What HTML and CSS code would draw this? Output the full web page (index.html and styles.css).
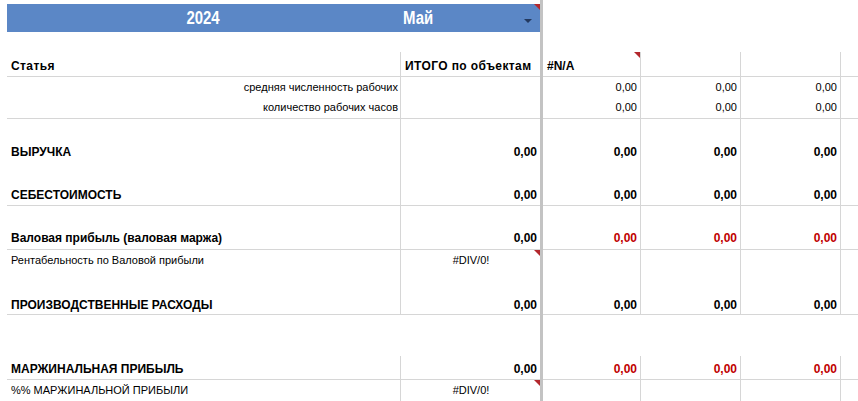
FILE: index.html
```html
<!DOCTYPE html>
<html lang="ru">
<head>
<meta charset="utf-8">
<title>Отчёт</title>
<link rel="stylesheet" href="styles.css">
</head>
<body>
<div class="sheet">
  <div class="row r-top">
    <div class="c a"></div><div class="c b"></div><div class="fz"></div>
    <div class="c m1"></div><div class="c m2"></div><div class="c m3"></div><div class="c m4"></div>
  </div>
  <div class="row r-title">
    <div class="c a title t-year"><span class="nar">2024</span></div>
    <div class="c b title t-month"><span class="nar">Май</span><span class="dd"></span><span class="note"></span></div>
    <div class="fz"></div>
    <div class="c m1"></div><div class="c m2"></div><div class="c m3"></div><div class="c m4"></div>
  </div>
  <div class="row r-blank">
    <div class="c a"></div><div class="c b"></div><div class="fz"></div>
    <div class="c m1"></div><div class="c m2"></div><div class="c m3"></div><div class="c m4"></div>
  </div>
  <div class="row g line r-head">
    <div class="c a bold wide">Статья</div>
    <div class="c b bold wide">ИТОГО по объектам</div>
    <div class="fz"></div>
    <div class="c m1 bold">#N/A<span class="note"></span></div>
    <div class="c m2"></div><div class="c m3"></div><div class="c m4"></div>
  </div>
  <div class="row g r-small1">
    <div class="c a sm right">средняя численность рабочих</div>
    <div class="c b"></div>
    <div class="fz"></div>
    <div class="c m1 sm right">0,00</div><div class="c m2 sm right">0,00</div><div class="c m3 sm right">0,00</div><div class="c m4"></div>
  </div>
  <div class="row g line r-small2">
    <div class="c a sm right">количество рабочих часов</div>
    <div class="c b"></div>
    <div class="fz"></div>
    <div class="c m1 sm right">0,00</div><div class="c m2 sm right">0,00</div><div class="c m3 sm right">0,00</div><div class="c m4"></div>
  </div>
  <div class="row g r-big1">
    <div class="c a bold">ВЫРУЧКА</div>
    <div class="c b bold right">0,00</div>
    <div class="fz"></div>
    <div class="c m1 bold right">0,00</div><div class="c m2 bold right">0,00</div><div class="c m3 bold right">0,00</div><div class="c m4"></div>
  </div>
  <div class="row g line r-big2">
    <div class="c a bold">СЕБЕСТОИМОСТЬ</div>
    <div class="c b bold right">0,00</div>
    <div class="fz"></div>
    <div class="c m1 bold right">0,00</div><div class="c m2 bold right">0,00</div><div class="c m3 bold right">0,00</div><div class="c m4"></div>
  </div>
  <div class="row g line r-big3">
    <div class="c a bold">Валовая прибыль (валовая маржа)</div>
    <div class="c b bold right">0,00</div>
    <div class="fz"></div>
    <div class="c m1 bold right red">0,00</div><div class="c m2 bold right red">0,00</div><div class="c m3 bold right red">0,00</div><div class="c m4"></div>
  </div>
  <div class="row g r-pct">
    <div class="c a sm">Рентабельность по Валовой прибыли</div>
    <div class="c b sm center">#DIV/0!<span class="note"></span></div>
    <div class="fz"></div>
    <div class="c m1"></div><div class="c m2"></div><div class="c m3"></div><div class="c m4"></div>
  </div>
  <div class="row g line r-big4">
    <div class="c a bold">ПРОИЗВОДСТВЕННЫЕ РАСХОДЫ</div>
    <div class="c b bold right">0,00</div>
    <div class="fz"></div>
    <div class="c m1 bold right">0,00</div><div class="c m2 bold right">0,00</div><div class="c m3 bold right">0,00</div><div class="c m4"></div>
  </div>
  <div class="row r-gap">
    <div class="c a"></div><div class="c b"></div><div class="fz"></div>
    <div class="c m1"></div><div class="c m2"></div><div class="c m3"></div><div class="c m4"></div>
  </div>
  <div class="row g line r-marg">
    <div class="c a bold">МАРЖИНАЛЬНАЯ ПРИБЫЛЬ</div>
    <div class="c b bold right">0,00</div>
    <div class="fz"></div>
    <div class="c m1 bold right red">0,00</div><div class="c m2 bold right red">0,00</div><div class="c m3 bold right red">0,00</div><div class="c m4"></div>
  </div>
  <div class="row g r-pct2">
    <div class="c a sm">%% МАРЖИНАЛЬНОЙ ПРИБЫЛИ</div>
    <div class="c b sm center">#DIV/0!<span class="note"></span></div>
    <div class="fz"></div>
    <div class="c m1"></div><div class="c m2"></div><div class="c m3"></div><div class="c m4"></div>
  </div>
</div>
</body>
</html>
```

FILE: styles.css
```css
* { box-sizing: border-box; }
html, body {
  margin: 0;
  padding: 0;
  background: #ffffff;
  overflow: hidden;
}
body {
  font-family: "Liberation Sans", Arial, sans-serif;
  color: #000;
  width: 858px;
  height: 401px;
}
.sheet {
  padding-left: 7px;
}
.row {
  display: grid;
  grid-template-columns: 393px 140px 3px 97px 100px 100px 1fr;
}
.c {
  position: relative;
  display: flex;
  align-items: flex-end;
  padding: 0 3px 3px 4px;
  white-space: nowrap;
  line-height: 14px;
  font-size: 12px;
}
.fz {
  background: #c3c3c3;
}
.g .b, .g .m2, .g .m3, .g .m4 {
  border-left: 1px solid #d6d6d6;
}
.line .c {
  border-bottom: 1px solid #d6d6d6;
}
.bold { font-weight: bold; font-size: 12px; }
.wide { letter-spacing: 0.4px; }
.sm { font-size: 11px; line-height: 13px; }
.right { justify-content: flex-end; }
.center { justify-content: center; }
.red { color: #c00000; }

.r-top { height: 4px; }
.r-title { height: 28px; }
.r-blank { height: 20px; }
.r-head { height: 25px; }
.r-small1 { height: 20px; }
.r-small2 { height: 22px; }
.r-big1 { height: 43px; }
.r-big2 { height: 44px; }
.r-big3 { height: 44px; }
.r-pct { height: 21px; }
.r-big4 { height: 44px; }
.r-gap { height: 41px; }
.r-marg { height: 24px; }
.r-pct2 { height: 22px; }

.r-small1 .c, .r-small2 .c { align-items: center; padding-bottom: 0; }
.r-small2 .c { padding-bottom: 1px; }
.r-small1 .a, .r-small2 .a { padding-right: 2px; }
.r-big3 .c { padding-bottom: 4px; }
.r-big4 .a { padding-bottom: 1px; }
.r-big4 .c { padding-bottom: 2px; }
.r-pct .c, .r-pct2 .c { align-items: flex-start; padding-top: 4px; padding-bottom: 0; }
.r-head .m1 { padding-left: 4px; }

.title {
  background: #5b87c6;
  color: #ffffff;
  font-family: "Liberation Sans", Arial, sans-serif;
  font-weight: bold;
  font-size: 18px;
  line-height: 20px;
  align-items: center;
  padding: 0;
}
.nar {
  display: inline-block;
  transform: scaleX(0.83);
}
.t-year { justify-content: center; }
.t-year .nar { transform-origin: center; }
.t-month { justify-content: flex-start; padding-left: 3px; }
.t-month .nar { transform-origin: left center; }

.dd {
  position: absolute;
  right: 8px;
  top: 15px;
  width: 0;
  height: 0;
  border-left: 4px solid transparent;
  border-right: 4px solid transparent;
  border-top: 4px solid #23395f;
}
.note {
  position: absolute;
  right: 0;
  top: 0;
  width: 0;
  height: 0;
  border-top: 6px solid #b3282d;
  border-left: 6px solid transparent;
}
```
